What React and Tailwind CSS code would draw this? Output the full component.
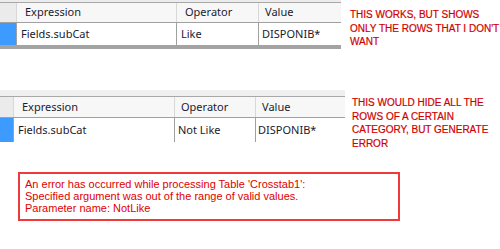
export default function App() {
  const cell = "font-['Noto_Sans',sans-serif] text-[11px] text-[#1b1b2f]";
  const red = "font-['Liberation_Sans',Arial,sans-serif] text-[10px] leading-[13.5px] text-[#d00000] whitespace-nowrap [-webkit-text-stroke:0.2px_#d00000]";
  return (
    <div className="w-[500px] h-[249px] bg-white overflow-hidden">
      {/* Row 1 */}
      <div className="flex items-start">
        <div className="w-[341px] shrink-0 flex flex-col bg-[#ececec] pt-[2px]">
          <div className="h-px bg-[#a8a8a8]" />
          <div className={`flex h-[19px] bg-[#f7f7f7] ${cell}`}>
            <div className="w-[17px] bg-[#ebebeb] border-r border-[#d8d8d8]" />
            <div className="w-[160px] border-r border-[#d8d8d8] pl-[8px] flex items-center">Expression</div>
            <div className="w-[82px] border-r border-[#d8d8d8] pl-[8px] flex items-center">Operator</div>
            <div className="flex-1 pl-[6px] flex items-center">Value</div>
          </div>
          <div className="h-px bg-[#a0a0a0]" />
          <div className={`flex h-[22px] bg-white ${cell}`}>
            <div className="w-[17px] bg-[#3d9bff] border-r border-[#a0a0a0]" />
            <div className="w-[160px] border-r border-[#a0a0a0] pl-[4px] flex items-center">Fields.subCat</div>
            <div className="w-[82px] border-r border-[#a0a0a0] pl-[4px] flex items-center">Like</div>
            <div className="flex-1 pl-[3px] flex items-center">DISPONIB*</div>
          </div>
          <div className="h-[4px] bg-[#a3a3a3]" />
        </div>
        <div className={`ml-[9px] mt-[8px] ${red}`}>
          THIS WORKS, BUT SHOWS<br />ONLY THE ROWS THAT I DON'T<br />WANT
        </div>
      </div>

      {/* Row 2 */}
      <div className="flex items-start mt-[41px]">
        <div className="w-[345px] shrink-0 flex flex-col bg-[#f0f0f0] pt-[6px]">
          <div className="h-px bg-[#a8a8a8]" />
          <div className={`flex h-[20px] bg-[#f7f7f7] ${cell}`}>
            <div className="w-[14px] bg-[#ebebeb] border-r border-[#d8d8d8]" />
            <div className="w-[161px] border-r border-[#d8d8d8] pl-[8px] flex items-center">Expression</div>
            <div className="w-[81px] border-r border-[#d8d8d8] pl-[6px] flex items-center">Operator</div>
            <div className="flex-1 pl-[6px] flex items-center">Value</div>
          </div>
          <div className="h-px bg-[#a0a0a0]" />
          <div className={`flex h-[24px] bg-white ${cell}`}>
            <div className="w-[14px] bg-[#3d9bff] border-r border-[#a0a0a0]" />
            <div className="w-[161px] border-r border-[#a0a0a0] pl-[4px] flex items-center">Fields.subCat</div>
            <div className="w-[81px] border-r border-[#a0a0a0] pl-[3px] flex items-center">Not Like</div>
            <div className="flex-1 pl-[2px] flex items-center">DISPONIB*</div>
          </div>
        </div>
        <div className={`ml-[7px] mt-[6px] ${red}`}>
          THIS WOULD HIDE ALL THE<br />ROWS OF A CERTAIN<br />CATEGORY, BUT GENERATE<br />ERROR
        </div>
      </div>

      {/* Error box */}
      <div className="ml-[18px] mt-[22px] w-[382px] border-2 border-[#f03a3a] px-[5px] pt-[4px] pb-[5px]">
        <div className="font-['Liberation_Sans',Arial,sans-serif] text-[11px] leading-[12px] text-[#e00000]">
          An error has occurred while processing Table 'Crosstab1':<br />
          Specified argument was out of the range of valid values.<br />
          Parameter name: NotLike
        </div>
      </div>
    </div>
  );
}
